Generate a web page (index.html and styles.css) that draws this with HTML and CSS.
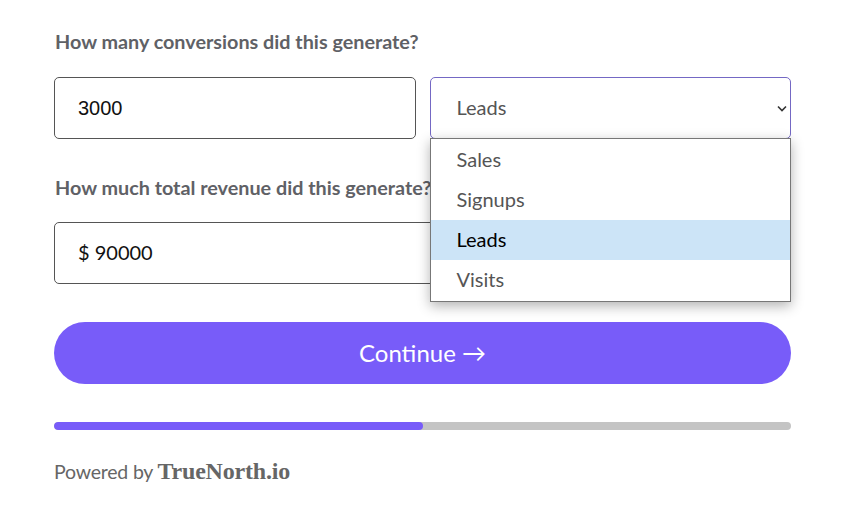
FILE: index.html
```html
<!DOCTYPE html>
<html lang="en">
<head>
    <meta charset="UTF-8">
    <title>Conversions</title>
    <link rel="stylesheet" href="styles.css">
</head>
<body>
    <div class="form">
        <div class="label first">How many conversions did this generate?</div>
        <div class="row">
            <div class="field number">3000</div>
            <div class="select-wrap">
                <div class="field select">
                    <span>Leads</span>
                    <svg class="chevron" width="10" height="7" viewBox="0 0 10 7">
                        <path d="M1 1.5 L5 5.5 L9 1.5" fill="none" stroke="#333" stroke-width="1.6"/>
                    </svg>
                </div>
                <ul class="options">
                    <li>Sales</li>
                    <li>Signups</li>
                    <li class="active">Leads</li>
                    <li>Visits</li>
                </ul>
            </div>
        </div>

        <div class="label">How much total revenue did this generate?</div>
        <div class="field money">$ 90000</div>

        <button class="continue">Continue →</button>

        <div class="progress"><div class="progress-fill" style="width: 50%"></div></div>

        <div class="footer">Powered by <span class="brand">TrueNorth.io</span></div>
    </div>
</body>
</html>
```

FILE: styles.css
```css
body {
    margin: 0;
    background: #fff;
    font-family: Lato, 'Liberation Sans', sans-serif;
}

.form {
    padding: 29px 54px 0 54px;
}

.label {
    font-size: 19.8px;
    font-weight: bold;
    color: #5f6166;
    line-height: 24px;
    margin-left: 1px;
    margin-bottom: 23px;
}

.label.first {
    margin-bottom: 24px;
}

.row {
    display: grid;
    grid-template-columns: 1fr 1fr;
    gap: 14px;
    margin-bottom: 36px;
}

.field {
    box-sizing: border-box;
    height: 62px;
    border: 1px solid #555;
    border-radius: 5px;
    padding: 0 23px;
    display: flex;
    align-items: center;
    font-size: 20px;
    color: #111;
}

.number {
    font-family: 'Liberation Sans', Arial, sans-serif;
}

.select-wrap {
    position: relative;
}

.select {
    border-color: #7468c4;
    padding: 0 3px 0 26px;
    justify-content: space-between;
    color: #555;
}

.select span {
    margin-top: -2px;
}

.chevron {
    margin-top: 1px;
}

.options {
    position: absolute;
    top: 61px;
    left: 0;
    right: 0;
    margin: 0;
    padding: 1px 0;
    list-style: none;
    background: #fff;
    border: 1px solid #777;
    box-shadow: 0 4px 12px rgba(0, 0, 0, 0.3);
    z-index: 2;
}

.options li {
    height: 40px;
    line-height: 38px;
    padding-left: 26px;
    font-size: 20px;
    color: #555;
}

.options li.active {
    background: #cce4f7;
    color: #000;
}

.money {
    margin-bottom: 38px;
    padding-bottom: 2px;
}

.continue {
    display: block;
    width: 100%;
    height: 62px;
    border: none;
    border-radius: 31px;
    background: #785cf9;
    color: #fff;
    font-family: Lato, sans-serif;
    font-size: 24px;
    padding-bottom: 2px;
    cursor: pointer;
}

.progress {
    margin-top: 38px;
    height: 8px;
    border-radius: 4px;
    background: #c4c4c4;
    overflow: hidden;
}

.progress-fill {
    height: 100%;
    background: #785cf9;
    border-radius: 4px;
}

.footer {
    margin-top: 28px;
    font-size: 19.5px;
    color: #666;
    letter-spacing: -0.2px;
}

.brand {
    font-family: 'Liberation Serif', 'DejaVu Serif', serif;
    font-weight: bold;
    font-size: 24px;
    color: #666;
    letter-spacing: -0.2px;
}
```
